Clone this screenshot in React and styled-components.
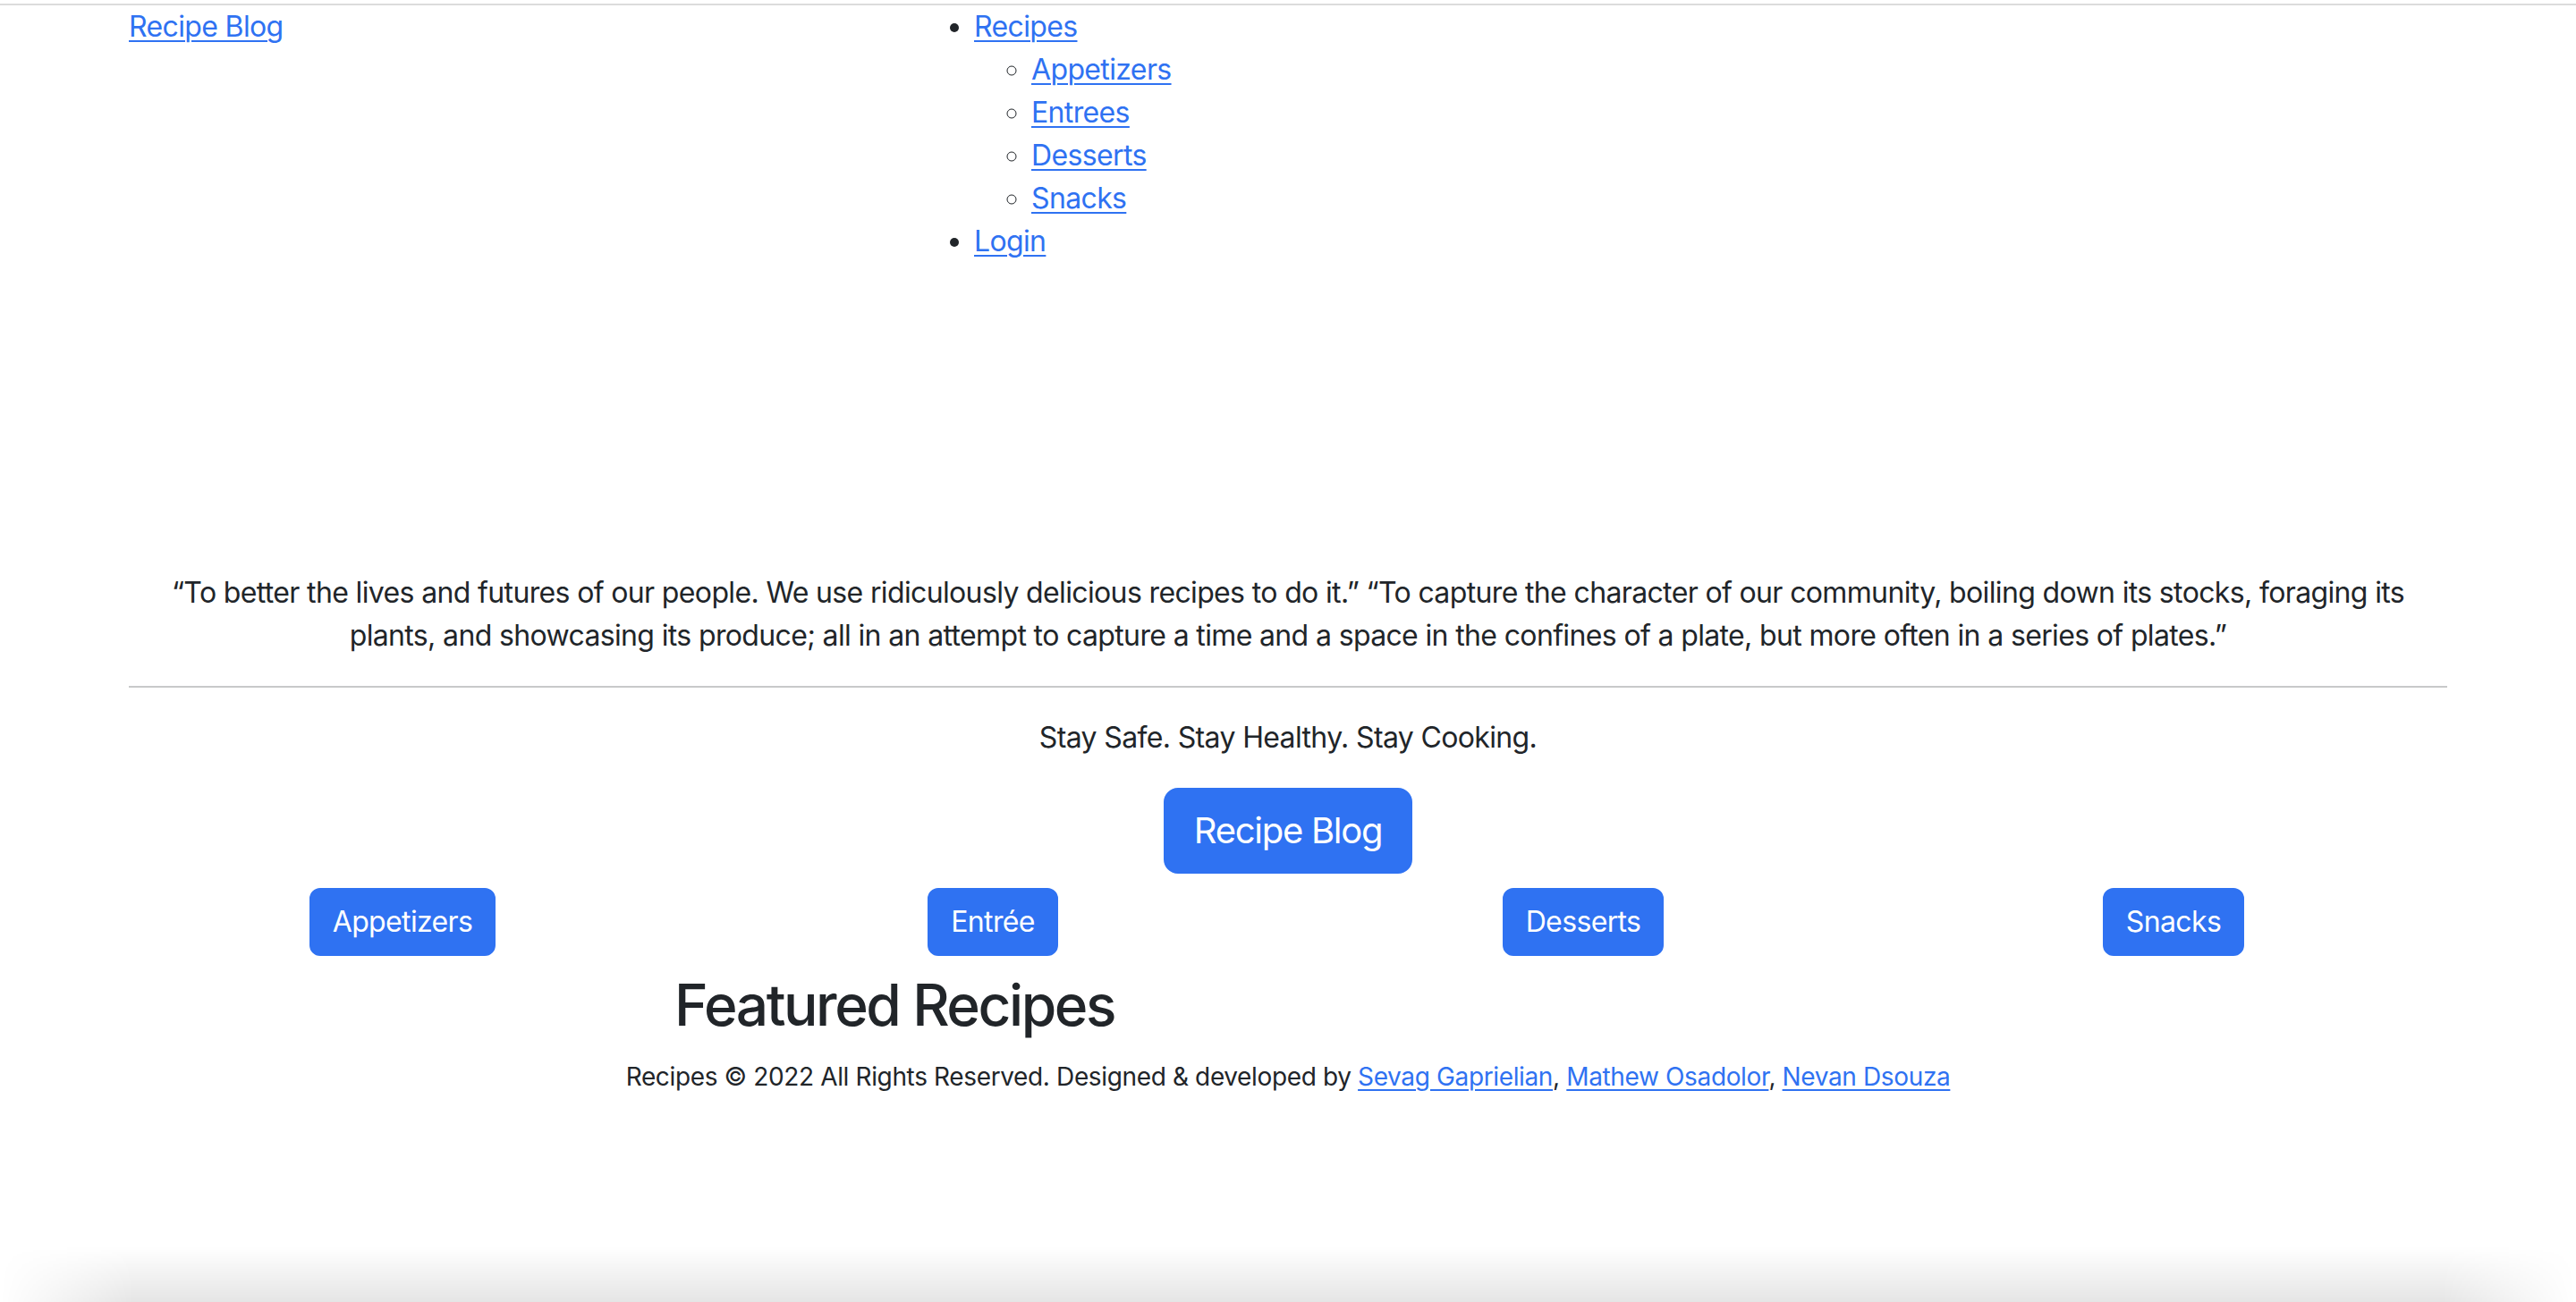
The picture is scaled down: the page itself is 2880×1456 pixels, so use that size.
import React from "react";
import styled, { createGlobalStyle } from "styled-components";

const Global = createGlobalStyle`
  * { box-sizing: border-box; }
  html, body { margin: 0; padding: 0; background: #ffffff; }
  body {
    font-family: Inter, "Noto Sans", "Liberation Sans", sans-serif;
    font-size: 32px;
    line-height: 1.5;
    letter-spacing: -0.02em;
    color: #212529;
  }
`;

const Page = styled.div`
  min-height: 1456px;
  display: flex;
  flex-direction: column;
`;

const TopRule = styled.div`
  height: 6px;
  border-bottom: 2px solid #dcdcdc;
  background: #ffffff;
`;

const Container = styled.main`
  flex: 1;
  width: 100%;
  max-width: 2640px;
  margin: 0 auto;
  padding: 0 24px;
`;

const Link = styled.a`
  color: #2f72f2;
  text-decoration: underline;
  text-decoration-thickness: 2px;
  text-underline-offset: 4px;
`;

const Header = styled.header`
  display: grid;
  grid-template-columns: 881px auto;
  align-items: start;
`;

const Brand = styled(Link)`
  font-size: 32px;
  line-height: 48px;
`;

const NavList = styled.ul`
  margin: ${(p) => (p.$nested ? "0" : "0 0 32px")};
  padding-left: 64px;
  list-style: ${(p) => (p.$nested ? "circle" : "disc")};
`;

const NavItem = styled.li`
  line-height: 48px;
`;

const Hero = styled.section`
  padding-top: 313px;
  text-align: center;
`;

const Mission = styled.p`
  margin: 0 0 32px;
  font-size: 32px;
  line-height: 48px;
`;

const Rule = styled.hr`
  margin: 0 0 32px;
  border: 0;
  border-top: 2px solid #c8c9ca;
`;

const Tagline = styled.p`
  margin: 0 0 32px;
  line-height: 48px;
`;

const Button = styled.a`
  display: inline-block;
  background: #2f72f2;
  color: #ffffff;
  border: 2px solid #2f72f2;
  text-decoration: none;
  font-weight: 400;
  font-size: ${(p) => (p.$large ? "40px" : "32px")};
  letter-spacing: ${(p) => (p.$large ? "-0.032em" : "-0.02em")};
  line-height: ${(p) => (p.$large ? "60px" : "48px")};
  padding: ${(p) => (p.$large ? "16px 32px" : "12px 24px")};
  border-radius: ${(p) => (p.$large ? "16px" : "12px")};
`;

const CategoryRow = styled.div`
  display: grid;
  grid-template-columns: repeat(4, 1fr);
  margin: 16px -24px 0;
`;

const CategoryCell = styled.div`
  display: flex;
  justify-content: center;
`;

const FeaturedRow = styled.div`
  display: grid;
  grid-template-columns: 8fr 4fr;
  margin: 17px -24px 0;
`;

const FeaturedTitle = styled.h2`
  margin: 0 0 20px;
  font-size: 64px;
  font-weight: 500;
  line-height: 1.2;
  letter-spacing: -0.038em;
  text-align: center;
`;

const Footer = styled.footer`
  text-align: center;
  font-size: 28px;
  line-height: 42px;
  letter-spacing: -0.013em;
`;

const WindowShadow = styled.div`
  height: 62px;
  background: linear-gradient(to bottom, rgba(0, 0, 0, 0) 0%, rgba(0, 0, 0, 0.1) 100%);
  -webkit-mask-image: linear-gradient(to right, transparent 0, #000 150px, #000 calc(100% - 150px), transparent 100%);
  mask-image: linear-gradient(to right, transparent 0, #000 150px, #000 calc(100% - 150px), transparent 100%);
`;

const categories = ["Appetizers", "Entrée", "Desserts", "Snacks"];
const subNav = ["Appetizers", "Entrees", "Desserts", "Snacks"];
const authors = ["Sevag Gaprielian", "Mathew Osadolor", "Nevan Dsouza"];

export default function App() {
  return (
    <Page>
      <Global />
      <TopRule />
      <Container>
        <Header>
          <Brand href="#">Recipe Blog</Brand>
          <NavList>
            <NavItem>
              <Link href="#">Recipes</Link>
              <NavList $nested>
                {subNav.map((s) => (
                  <NavItem key={s}>
                    <Link href="#">{s}</Link>
                  </NavItem>
                ))}
              </NavList>
            </NavItem>
            <NavItem>
              <Link href="#">Login</Link>
            </NavItem>
          </NavList>
        </Header>
        <Hero>
          <Mission>
            “To better the lives and futures of our people. We use ridiculously delicious recipes to do it.” “To
            capture the character of our community, boiling down its stocks, foraging its plants, and showcasing its
            produce; all in an attempt to capture a time and a space in the confines of a plate, but more often in a
            series of plates.”
          </Mission>
          <Rule />
          <Tagline>Stay Safe. Stay Healthy. Stay Cooking.</Tagline>
          <Button $large href="#">Recipe Blog</Button>
        </Hero>
        <CategoryRow>
          {categories.map((c) => (
            <CategoryCell key={c}>
              <Button href="#">{c}</Button>
            </CategoryCell>
          ))}
        </CategoryRow>
        <FeaturedRow>
          <FeaturedTitle>Featured Recipes</FeaturedTitle>
        </FeaturedRow>
        <Footer>
          Recipes © 2022 All Rights Reserved. Designed &amp; developed by{" "}
          {authors.map((a, i) => (
            <React.Fragment key={a}>
              <Link href="#">{a}</Link>
              {i < authors.length - 1 ? ", " : ""}
            </React.Fragment>
          ))}
        </Footer>
      </Container>
      <WindowShadow />
    </Page>
  );
}
